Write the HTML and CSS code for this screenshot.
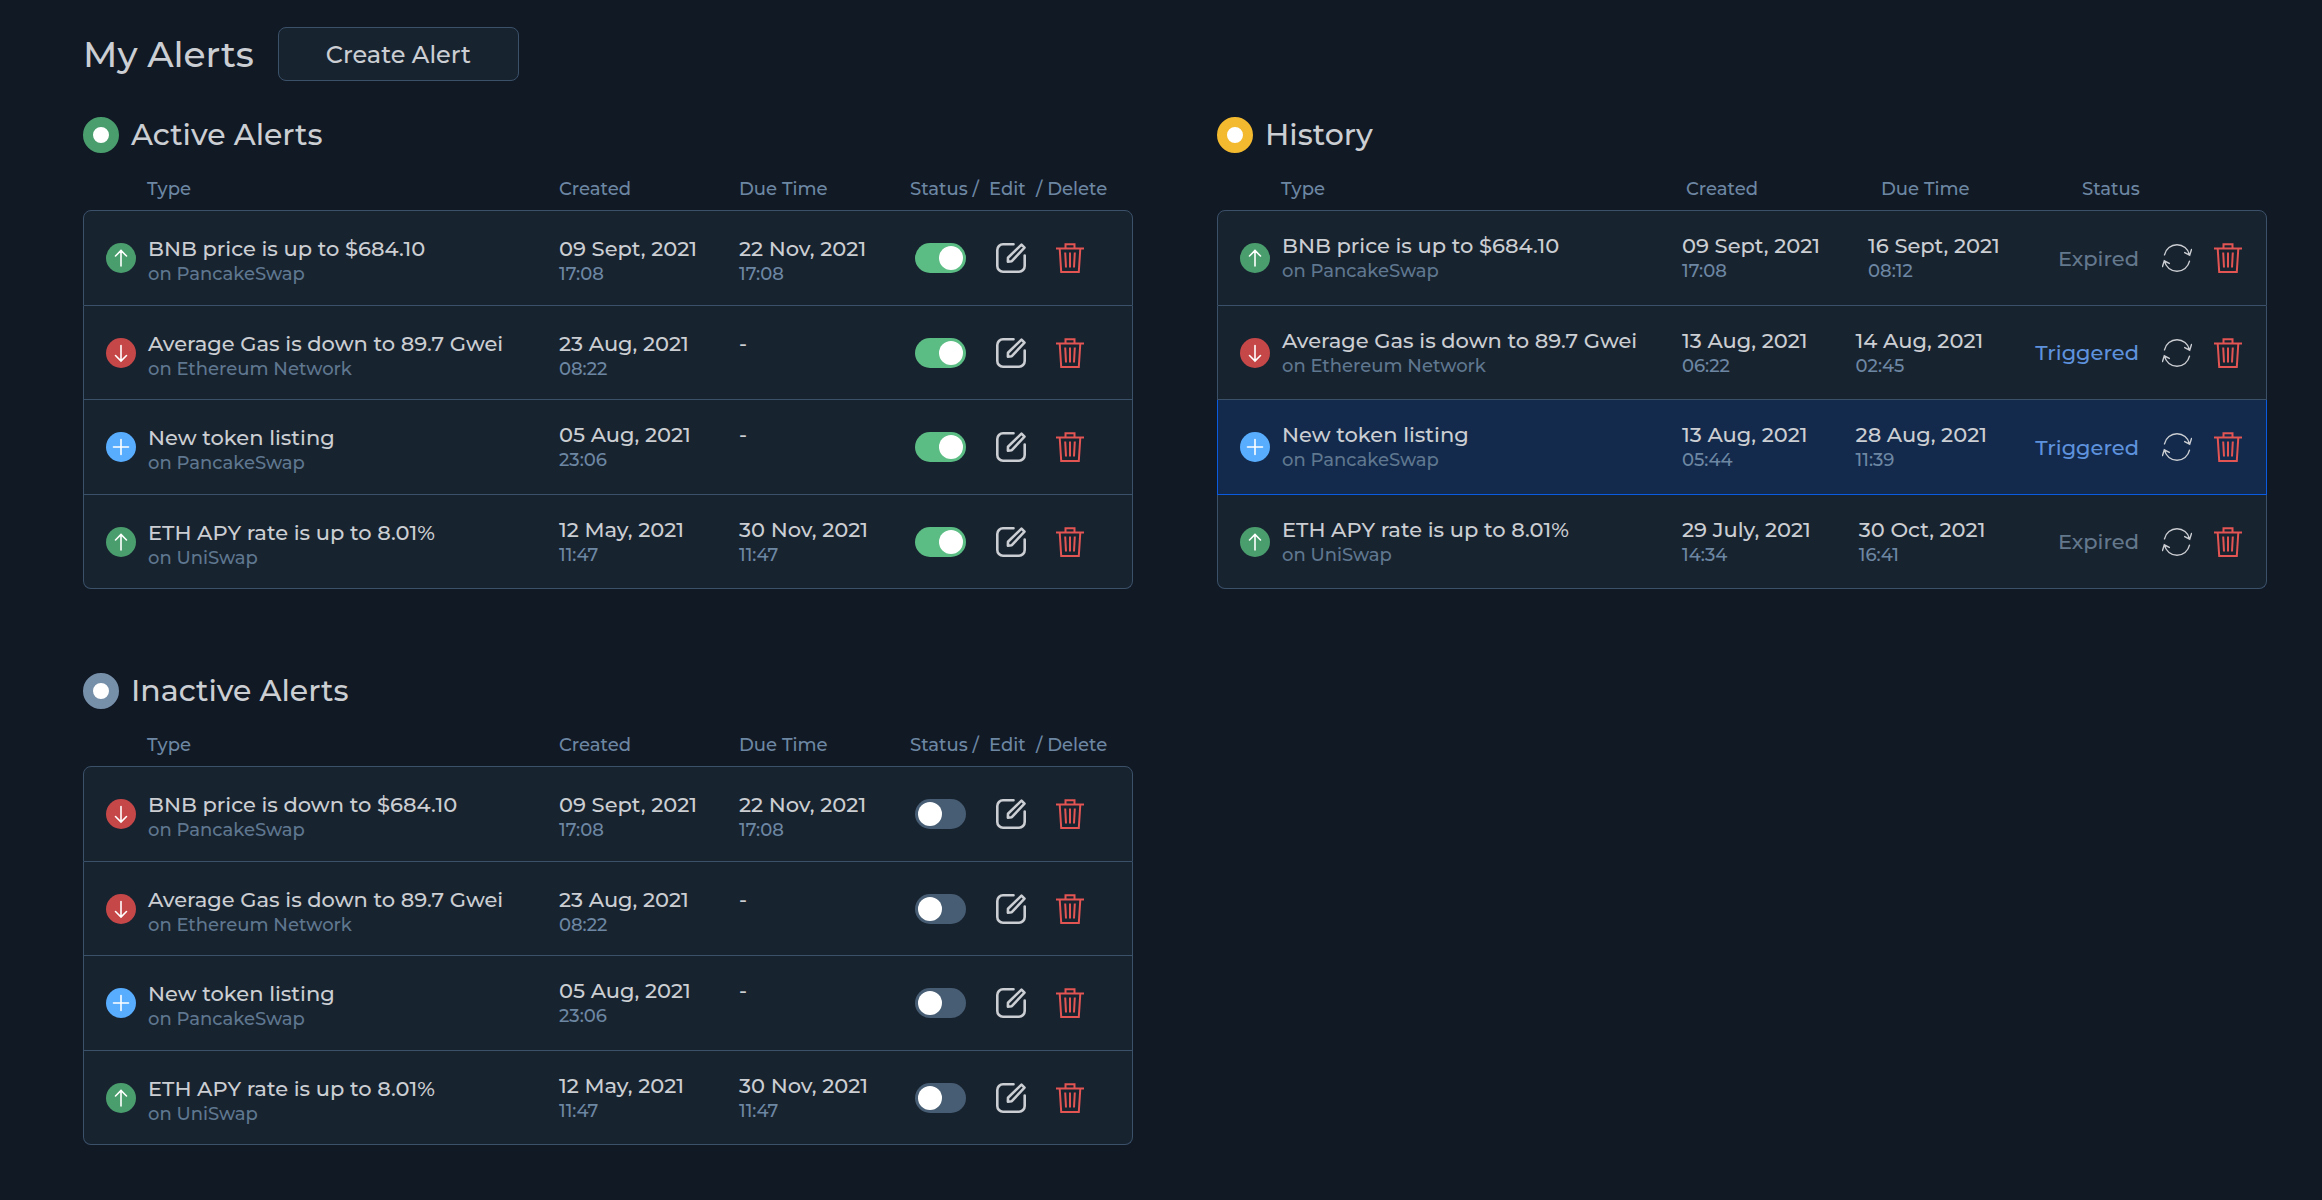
FILE: index.html
```html
<!DOCTYPE html>
<html lang="en">
<head>
<meta charset="utf-8">
<meta name="viewport" content="width=device-width, initial-scale=1">
<title>My Alerts</title>
<link rel="stylesheet" href="styles.css">
</head>
<body>
<svg class="sprite" aria-hidden="true">
  <symbol id="up" viewBox="0 0 30 30"><path d="M15 23V7.500M9.500 13 15 7.500 20.500 13"/></symbol>
  <symbol id="down" viewBox="0 0 30 30"><path d="M15 7.500V23M9.500 17.500 15 23l5.500-5.500"/></symbol>
  <symbol id="plus" viewBox="0 0 30 30"><path d="M15 7.500v15M7.500 15h15"/></symbol>
  <symbol id="edit" viewBox="0 0 30 30"><path d="M17.500 1.300H7a5.700 5.700 0 0 0-5.700 5.700v16A5.700 5.700 0 0 0 7 28.700h16a5.700 5.700 0 0 0 5.700-5.700V12.500"/><path d="M25.500 1.600 28.500 4.600 15.800 18.200 11.900 18.600 12 14.700Z"/></symbol>
  <symbol id="trash" viewBox="0 0 28 30"><path d="M0 5.500h28M9.500 5.500V1.200h9v4.300M3.700 5.500 5.200 29h17.600L24.300 5.500M9.200 9.500 10 24.500M14 9.500v15M18.800 9.500 18 24.500"/></symbol>
  <symbol id="renew" viewBox="0 0 30 28"><path d="M2.500 10.800A12.800 12.800 0 0 1 27.500 10.800M22.700 8.600 27.700 11.200 29.500 5.500M27.500 17.200A12.800 12.800 0 0 1 2.500 17.200M7.300 19.400 2.300 16.800 .5 22.500"/></symbol>
</svg>

<header class="page-head">
  <h1>My Alerts</h1>
  <button type="button" class="create">Create Alert</button>
</header>

<main class="panels">
  <section class="panel">
    <h2><span class="dot dot-green"></span>Active Alerts</h2>
    <table class="alerts">
      <thead><tr><th class="type-head">Type</th><th>Created</th><th>Due Time</th><th>Status /</th><th>Edit</th><th>/ Delete</th></tr></thead>
      <tbody>
        <tr>
          <td class="type"><svg class="badge green"><use href="#up"/></svg><div><b>BNB price is up to $684.10</b><small>on PancakeSwap</small></div></td>
          <td class="date"><b>09 Sept, 2021</b><time>17:08</time></td>
          <td class="date"><b>22 Nov, 2021</b><time>17:08</time></td>
          <td class="switch"><input type="checkbox" checked aria-label="Status"></td>
          <td class="edit"><button type="button" aria-label="Edit"><svg class="i-edit"><use href="#edit"/></svg></button></td>
          <td class="delete"><button type="button" aria-label="Delete"><svg class="i-trash"><use href="#trash"/></svg></button></td>
        </tr>
        <tr>
          <td class="type"><svg class="badge red"><use href="#down"/></svg><div><b>Average Gas is down to 89.7 Gwei</b><small>on Ethereum Network</small></div></td>
          <td class="date"><b>23 Aug, 2021</b><time>08:22</time></td>
          <td class="date"><b>-</b></td>
          <td class="switch"><input type="checkbox" checked aria-label="Status"></td>
          <td class="edit"><button type="button" aria-label="Edit"><svg class="i-edit"><use href="#edit"/></svg></button></td>
          <td class="delete"><button type="button" aria-label="Delete"><svg class="i-trash"><use href="#trash"/></svg></button></td>
        </tr>
        <tr>
          <td class="type"><svg class="badge blue"><use href="#plus"/></svg><div><b>New token listing</b><small>on PancakeSwap</small></div></td>
          <td class="date"><b>05 Aug, 2021</b><time>23:06</time></td>
          <td class="date"><b>-</b></td>
          <td class="switch"><input type="checkbox" checked aria-label="Status"></td>
          <td class="edit"><button type="button" aria-label="Edit"><svg class="i-edit"><use href="#edit"/></svg></button></td>
          <td class="delete"><button type="button" aria-label="Delete"><svg class="i-trash"><use href="#trash"/></svg></button></td>
        </tr>
        <tr>
          <td class="type"><svg class="badge green"><use href="#up"/></svg><div><b>ETH APY rate is up to 8.01%</b><small>on UniSwap</small></div></td>
          <td class="date"><b>12 May, 2021</b><time>11:47</time></td>
          <td class="date"><b>30 Nov, 2021</b><time>11:47</time></td>
          <td class="switch"><input type="checkbox" checked aria-label="Status"></td>
          <td class="edit"><button type="button" aria-label="Edit"><svg class="i-edit"><use href="#edit"/></svg></button></td>
          <td class="delete"><button type="button" aria-label="Delete"><svg class="i-trash"><use href="#trash"/></svg></button></td>
        </tr>
      </tbody>
    </table>
  </section>

  <section class="panel">
    <h2><span class="dot dot-yellow"></span>History</h2>
    <table class="alerts history">
      <thead><tr><th class="type-head">Type</th><th>Created</th><th>Due Time</th><th>Status</th></tr></thead>
      <tbody>
        <tr>
          <td class="type"><svg class="badge green"><use href="#up"/></svg><div><b>BNB price is up to $684.10</b><small>on PancakeSwap</small></div></td>
          <td class="date"><b>09 Sept, 2021</b><time>17:08</time></td>
          <td class="date"><b>16 Sept, 2021</b><time>08:12</time></td>
          <td class="state">Expired</td>
          <td class="actions"><button type="button" aria-label="Renew"><svg class="i-renew"><use href="#renew"/></svg></button><button type="button" aria-label="Delete"><svg class="i-trash"><use href="#trash"/></svg></button></td>
        </tr>
        <tr>
          <td class="type"><svg class="badge red"><use href="#down"/></svg><div><b>Average Gas is down to 89.7 Gwei</b><small>on Ethereum Network</small></div></td>
          <td class="date"><b>13 Aug, 2021</b><time>06:22</time></td>
          <td class="date"><b>14 Aug, 2021</b><time>02:45</time></td>
          <td class="state triggered">Triggered</td>
          <td class="actions"><button type="button" aria-label="Renew"><svg class="i-renew"><use href="#renew"/></svg></button><button type="button" aria-label="Delete"><svg class="i-trash"><use href="#trash"/></svg></button></td>
        </tr>
        <tr class="selected">
          <td class="type"><svg class="badge blue"><use href="#plus"/></svg><div><b>New token listing</b><small>on PancakeSwap</small></div></td>
          <td class="date"><b>13 Aug, 2021</b><time>05:44</time></td>
          <td class="date"><b>28 Aug, 2021</b><time>11:39</time></td>
          <td class="state triggered">Triggered</td>
          <td class="actions"><button type="button" aria-label="Renew"><svg class="i-renew"><use href="#renew"/></svg></button><button type="button" aria-label="Delete"><svg class="i-trash"><use href="#trash"/></svg></button></td>
        </tr>
        <tr>
          <td class="type"><svg class="badge green"><use href="#up"/></svg><div><b>ETH APY rate is up to 8.01%</b><small>on UniSwap</small></div></td>
          <td class="date"><b>29 July, 2021</b><time>14:34</time></td>
          <td class="date"><b>30 Oct, 2021</b><time>16:41</time></td>
          <td class="state">Expired</td>
          <td class="actions"><button type="button" aria-label="Renew"><svg class="i-renew"><use href="#renew"/></svg></button><button type="button" aria-label="Delete"><svg class="i-trash"><use href="#trash"/></svg></button></td>
        </tr>
      </tbody>
    </table>
  </section>

  <section class="panel">
    <h2><span class="dot dot-gray"></span>Inactive Alerts</h2>
    <table class="alerts">
      <thead><tr><th class="type-head">Type</th><th>Created</th><th>Due Time</th><th>Status /</th><th>Edit</th><th>/ Delete</th></tr></thead>
      <tbody>
        <tr>
          <td class="type"><svg class="badge red"><use href="#down"/></svg><div><b>BNB price is down to $684.10</b><small>on PancakeSwap</small></div></td>
          <td class="date"><b>09 Sept, 2021</b><time>17:08</time></td>
          <td class="date"><b>22 Nov, 2021</b><time>17:08</time></td>
          <td class="switch"><input type="checkbox" aria-label="Status"></td>
          <td class="edit"><button type="button" aria-label="Edit"><svg class="i-edit"><use href="#edit"/></svg></button></td>
          <td class="delete"><button type="button" aria-label="Delete"><svg class="i-trash"><use href="#trash"/></svg></button></td>
        </tr>
        <tr>
          <td class="type"><svg class="badge red"><use href="#down"/></svg><div><b>Average Gas is down to 89.7 Gwei</b><small>on Ethereum Network</small></div></td>
          <td class="date"><b>23 Aug, 2021</b><time>08:22</time></td>
          <td class="date"><b>-</b></td>
          <td class="switch"><input type="checkbox" aria-label="Status"></td>
          <td class="edit"><button type="button" aria-label="Edit"><svg class="i-edit"><use href="#edit"/></svg></button></td>
          <td class="delete"><button type="button" aria-label="Delete"><svg class="i-trash"><use href="#trash"/></svg></button></td>
        </tr>
        <tr>
          <td class="type"><svg class="badge blue"><use href="#plus"/></svg><div><b>New token listing</b><small>on PancakeSwap</small></div></td>
          <td class="date"><b>05 Aug, 2021</b><time>23:06</time></td>
          <td class="date"><b>-</b></td>
          <td class="switch"><input type="checkbox" aria-label="Status"></td>
          <td class="edit"><button type="button" aria-label="Edit"><svg class="i-edit"><use href="#edit"/></svg></button></td>
          <td class="delete"><button type="button" aria-label="Delete"><svg class="i-trash"><use href="#trash"/></svg></button></td>
        </tr>
        <tr>
          <td class="type"><svg class="badge green"><use href="#up"/></svg><div><b>ETH APY rate is up to 8.01%</b><small>on UniSwap</small></div></td>
          <td class="date"><b>12 May, 2021</b><time>11:47</time></td>
          <td class="date"><b>30 Nov, 2021</b><time>11:47</time></td>
          <td class="switch"><input type="checkbox" aria-label="Status"></td>
          <td class="edit"><button type="button" aria-label="Edit"><svg class="i-edit"><use href="#edit"/></svg></button></td>
          <td class="delete"><button type="button" aria-label="Delete"><svg class="i-trash"><use href="#trash"/></svg></button></td>
        </tr>
      </tbody>
    </table>
  </section>
</main>
</body>
</html>
```
FILE: styles.css
```css
:root {
  --bg: #111925;
  --surface: #182330;
  --line: #3b5169;
  --text: #cbced2;
  --label: #6d87a3;
  --muted: #5f778f;
}

* { box-sizing: border-box; }

body {
  margin: 0;
  padding: 27px 55px 40px 83px;
  background: var(--bg);
  color: var(--text);
  font-family: Montserrat, Inter, sans-serif;
  font-size: 21px;
  font-weight: 500;
}

.sprite { display: none; }

h1, h2 { margin: 0; font-weight: 500; }

button {
  padding: 0;
  border: 0;
  background: none;
  color: inherit;
  font: inherit;
  cursor: pointer;
}

.page-head {
  display: flex;
  align-items: center;
  gap: 24px;
  margin-bottom: 36px;
}

h1 { font-size: 36px; line-height: 54px; }

.page-head .create {
  padding: 2px 47px 0;
  border: 1px solid var(--line);
  border-radius: 8px;
  background: var(--surface);
  font-size: 24px;
  line-height: 50px;
}

.panels {
  display: grid;
  grid-template-columns: repeat(2, minmax(0, 1fr));
  gap: 84px;
}

h2 {
  display: flex;
  align-items: center;
  gap: 12px;
  font-size: 30px;
  line-height: 36px;
}

.dot {
  width: 36px;
  height: 36px;
  border: 10px solid;
  border-radius: 50%;
  background: #fff;
}
.dot-green { border-color: #4a9e6d; }
.dot-yellow { border-color: #f3b92f; }
.dot-gray { border-color: #7790aa; }

/* Tables: every row is its own grid so the body can be a rounded card */
.alerts, .alerts thead, .alerts tbody { display: block; }

.alerts tr {
  display: grid;
  grid-template-columns: minmax(0, 1fr) 180px 171px 79px 47px 96px;
  align-items: center;
}

.alerts th {
  padding: 0;
  color: var(--label);
  font-size: 18px;
  font-weight: 500;
  line-height: 24px;
  text-align: left;
}

.alerts thead tr {
  padding: 24px 1px 9px;
}
.alerts .type-head { padding-left: 63px; }

.alerts tbody tr {
  min-height: 95px;
  border: 1px solid var(--line);
  border-top: 0;
  background: var(--surface);
}
.alerts tbody tr:nth-child(even) { min-height: 94px; }
.alerts tbody tr:first-child {
  min-height: 96px;
  border-top: 1px solid var(--line);
  border-radius: 8px 8px 0 0;
}
.alerts tbody tr:last-child { border-radius: 0 0 8px 8px; }
.alerts tbody tr.selected {
  border-color: #0a5be0;
  background: #132a4c;
}

.alerts td { padding: 0; }
.alerts td b {
  display: block;
  font-weight: 500;
  line-height: 26px;
  white-space: nowrap;
}
.alerts small, .alerts time {
  display: block;
  min-height: 24px;
  font-size: 18px;
  line-height: 24px;
}
.alerts small { color: var(--muted); }
.alerts time { color: var(--label); }

.type {
  display: flex;
  align-items: center;
  gap: 12px;
}
.alerts .type { padding-left: 22px; }
.type div { padding-top: 6px; }
.alerts .date { min-height: 56px; padding-top: 6px; }
.alerts tbody tr:nth-child(n+3) .date { min-height: 50px; padding-top: 0; }

svg {
  display: block;
  fill: none;
  stroke: currentColor;
  stroke-linecap: round;
}
.badge {
  flex: none;
  width: 30px;
  height: 30px;
  border-radius: 50%;
  color: #fff;
  stroke-width: 1.6;
}
.green { background: #4a9e6d; }
.red { background: #c54748; }
.blue { background: #58adff; }

.i-edit {
  width: 30px;
  height: 30px;
  stroke-width: 2.6;
  stroke-linejoin: round;
}
.i-trash {
  width: 28px;
  height: 30px;
  color: #e25553;
  stroke-width: 2;
  stroke-linecap: butt;
}
.i-renew {
  width: 30px;
  height: 28px;
  stroke-width: 1.4;
}
.alerts button { display: block; }

.alerts .switch { padding-left: 5px; }
.alerts .edit { padding-left: 7px; }
.alerts .delete { padding-left: 20px; }

.switch input {
  display: flex;
  align-items: center;
  width: 51px;
  height: 30px;
  margin: 0;
  padding: 0 3px;
  border-radius: 15px;
  background: #475d73;
  appearance: none;
  cursor: pointer;
}
.switch input::before {
  width: 24px;
  height: 24px;
  border-radius: 50%;
  background: #fff;
  content: "";
}
.switch input:checked {
  justify-content: flex-end;
  background: #5bbd83;
}

/* History: the due date follows the created date at a fixed gap */
.history thead tr { grid-template-columns: minmax(0, 1fr) 195px 201px 184px; }
.history tbody tr { display: flex; }
.history .type { width: calc(100% - 584px); }
.history .type div, .history tbody tr .date { min-height: 50px; padding-top: 0; }
.history .date + .date { margin-left: 48px; }
.state {
  margin-left: auto;
  color: #64788c;
}
.triggered { color: #5e92dd; }
.alerts .actions {
  display: flex;
  align-items: center;
  gap: 22px;
  padding: 0 24px 0 23px;
}
```
